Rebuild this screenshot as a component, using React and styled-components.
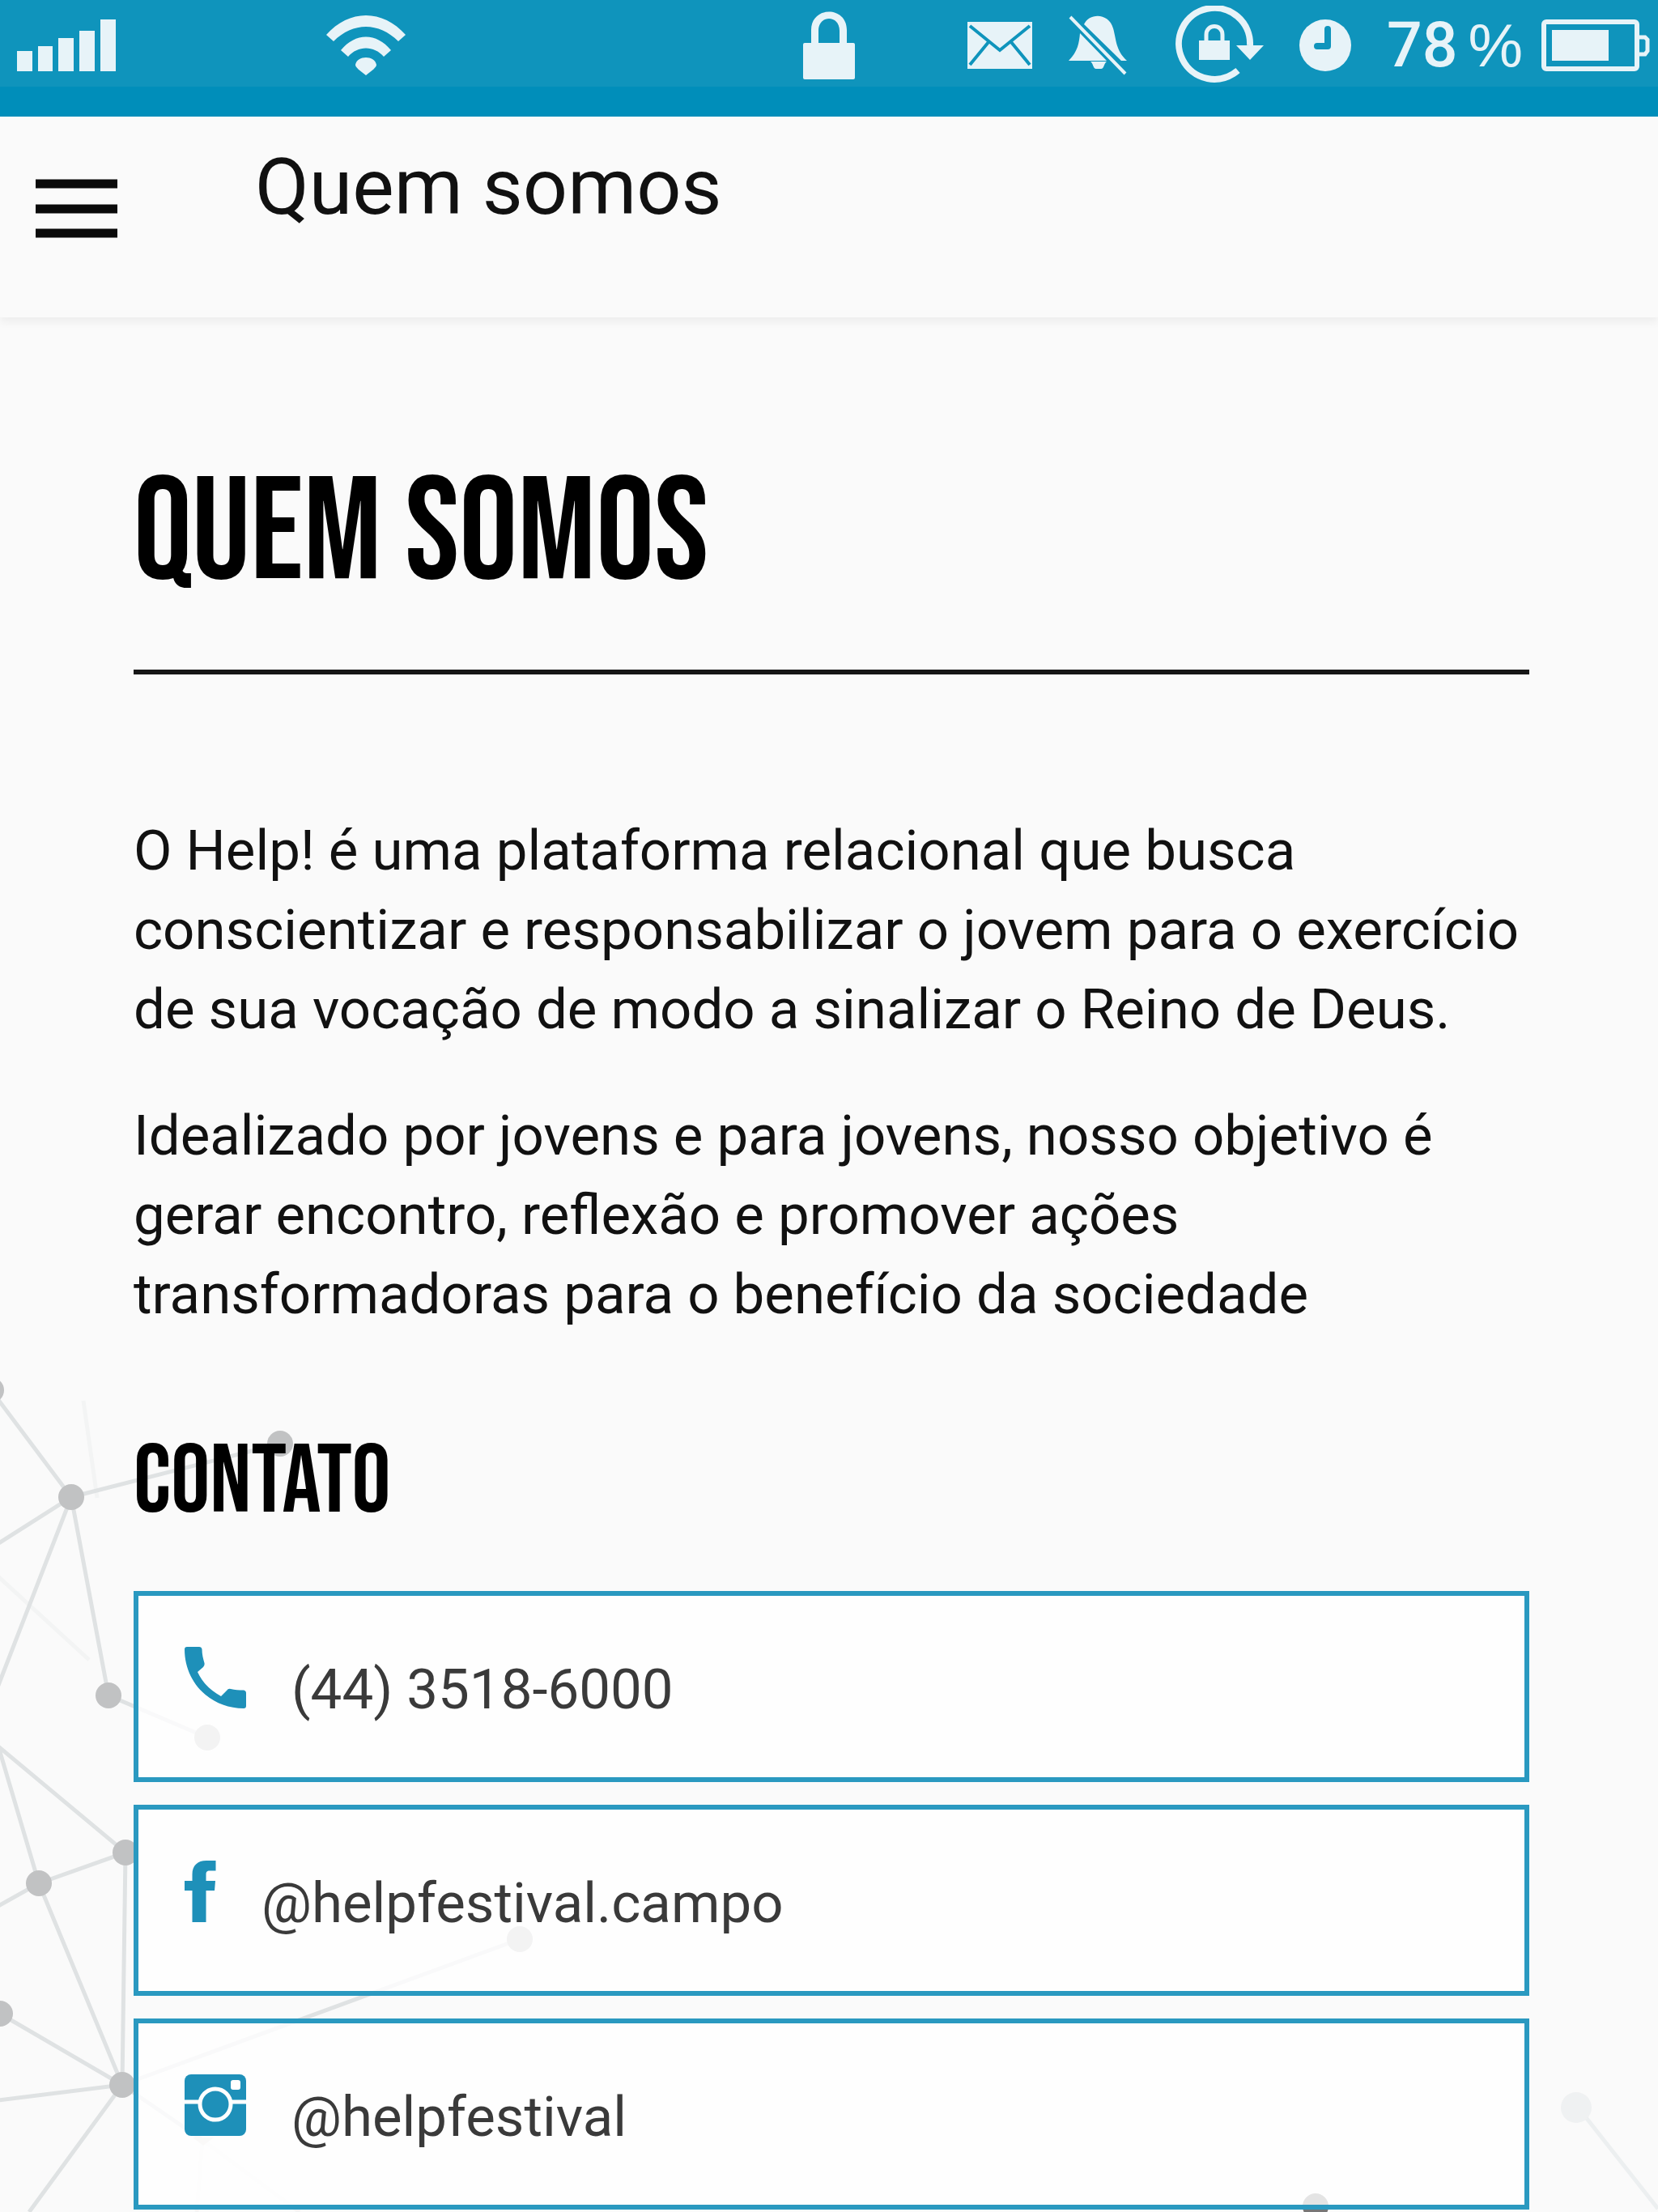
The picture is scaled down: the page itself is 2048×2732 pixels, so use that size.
import React from 'react';
import styled, { createGlobalStyle } from 'styled-components';

const GlobalStyle = createGlobalStyle`
  *, *::before, *::after { box-sizing: border-box; }
  body {
    margin: 0;
    background: #fafafa;
    color: #111;
    font-family: Roboto, 'Liberation Sans', sans-serif;
  }
  h1, h2, p, ul { margin: 0; padding: 0; }
`;

const Screen = styled.div`
  position: relative;
  min-height: 100vh;
  overflow: hidden;
`;

const StatusBar = styled.div`
  display: grid;
  grid-template-columns: 1fr auto 1fr;
  align-items: center;
  height: 144px;
  padding: 0 10px 32px;
  background: linear-gradient(#0f94bc 0 107px, #008eba 107px);
  color: #e7f3f8;
`;

const StatusGroup = styled.div`
  display: flex;
  align-items: center;
  justify-content: ${(p) => (p.$end ? 'flex-end' : 'flex-start')};
  gap: ${(p) => p.$gap}px;
  padding-left: ${(p) => p.$inset || 0}px;
`;

const Charge = styled.span`
  display: flex;
  gap: 13px;
  font: 500 77px/80px Roboto, 'Liberation Sans', sans-serif;
`;

const Percent = styled.span`
  font: 400 76px/80px 'Liberation Sans', Arial, sans-serif;
`;

const Glyph = styled.svg`
  display: block;
  flex: none;
  fill: ${(p) => (p.$line ? 'none' : 'currentColor')};
  stroke: ${(p) => (p.$line ? 'currentColor' : 'none')};
`;

const TopBar = styled.header`
  display: flex;
  align-items: flex-start;
  gap: 170px;
  height: 248px;
  padding: 37px 44px 0;
  box-shadow: 0 6px 10px rgba(0, 0, 0, 0.05);
`;

const MenuButton = styled.button`
  padding: 40px 0 0;
  border: 0;
  background: none;
  color: #0a0a0a;
`;

const TopTitle = styled.p`
  font-size: 97px;
  line-height: 100px;
`;

const Content = styled.main`
  position: relative;
  padding: 178px 159px 0 165px;
`;

const Heading = styled.h1`
  padding-bottom: 77px;
  border-bottom: 6px solid #161616;
  color: #000;
  font: 400 180px/180px 'Bebas Neue', 'Roboto Condensed', sans-serif;
`;

const About = styled.section`
  display: grid;
  gap: 58px;
  margin-top: 169px;
  font-size: 69px;
  line-height: 98px;
`;

const Subheading = styled.h2`
  margin: 123px 0 74px;
  color: #000;
  font: 400 120px/120px 'Bebas Neue', 'Roboto Condensed', sans-serif;
`;

const ContactList = styled.ul`
  display: grid;
  gap: 28px;
  list-style: none;
`;

const ContactLink = styled.a`
  display: flex;
  align-items: baseline;
  gap: 56px;
  height: 236px;
  padding: 63px 57px 0;
  border: 6px solid #2a99c0;
  background: rgba(255, 255, 255, 0.8);
  color: #3a3a3a;
  font-size: 69px;
  line-height: 98px;
  text-decoration: none;

  svg { color: #1e90b9; }
`;

const Network = styled.svg`
  position: absolute;
  top: 1680px;
  ${(p) => p.$side}: 0;
  fill: #c1c2c3;
  stroke: #dfe2e3;
  stroke-width: 5;
  pointer-events: none;

  circle { stroke: none; }
`;

const Signal = () => (
  <Glyph width="122" height="64" viewBox="0 0 122 64" aria-label="Sinal">
    <path d="M0 39h19v25H0zM26 33h18v31H26zM51 23h19v41H51zM77 14h19v50H77zM103 0h19v64h-19z" />
  </Glyph>
);

const Wifi = () => (
  <Glyph width="98" height="74" viewBox="0 0 98 74" aria-label="Wi-Fi">
    <path d="M0 24C28-8 70-8 98 24l-9 8C65 8 33 8 9 32zM18 43c18-22 44-22 62 0l-9 8c-12-14-32-14-44 0zM36 61c2-12 24-12 26 0 0 3-5 7-13 13-8-6-13-10-13-13z" />
  </Glyph>
);

const Lock = () => (
  <Glyph width="64" height="84" viewBox="0 0 64 84" aria-label="Bloqueado">
    <path d="M2 39h8V23C10-7 54-7 54 23v16h8q2 0 2 2v41q0 2-2 2H2q-2 0-2-2V41q0-2 2-2zM19 39h26V24C45 4 19 4 19 24z" />
  </Glyph>
);

const Mail = () => (
  <Glyph width="80" height="58" viewBox="0 0 80 58" aria-label="Mensagem">
    <path d="M0 0h80v58H0z" />
    <path d="M3 5l37 30L77 5M3 53l23-28M77 53L54 25" fill="none" stroke="#0f94bc" strokeWidth="4" />
  </Glyph>
);

const BellOff = () => (
  <Glyph width="74" height="74" viewBox="0 0 74 74" aria-label="Silencioso">
    <path d="M20 11C27-4 51-3 56 16c4 14 3 27 17 40h-7zM15 22l33 34H1c11-11 13-22 14-34zM28 57h20c-4 3-3 9-7 9h-6c-4 0-3-6-7-9z" />
    <path d="M3 2l68 70" stroke="currentColor" strokeWidth="4" />
  </Glyph>
);

const RotationLock = () => (
  <Glyph width="124" height="98" viewBox="0 0 124 98" aria-label="Rotação bloqueada">
    <path d="M92 80A44 44 0 1 1 107 49" fill="none" stroke="currentColor" strokeWidth="8" />
    <path d="M90 49h34l-17 18zM44 43h38v24H44z" />
    <path d="M53 44V36c0-14 20-14 20 0v8" fill="none" stroke="currentColor" strokeWidth="5" />
  </Glyph>
);

const Clock = () => (
  <Glyph width="64" height="64" viewBox="0 0 64 64" aria-label="Alarme">
    <circle cx="32" cy="32" r="32" />
    <path d="M35 12v21H22" fill="none" stroke="#0f94bc" strokeWidth="8" strokeLinecap="round" strokeLinejoin="round" />
  </Glyph>
);

const Battery = () => (
  <Glyph width="134" height="64" viewBox="0 0 134 64" aria-label="Bateria">
    <rect x="3" y="3" width="115" height="58" rx="3" fill="none" stroke="currentColor" strokeWidth="6" />
    <path d="M120 22h8l3 3v14l-3 4h-8" fill="none" stroke="currentColor" strokeWidth="5" />
    <path d="M13 13h70v38H13z" />
  </Glyph>
);

const MenuIcon = () => (
  <Glyph $line width="101" height="74" viewBox="0 0 101 74" strokeWidth="11">
    <path d="M0 6h101M0 37h101M0 67h101" />
  </Glyph>
);

const PhoneIcon = () => (
  <Glyph width="76" height="76" viewBox="0 0 76 76" aria-hidden="true">
    <path d="M3 0h15q3 0 3.500 3c0 6 1.500 12 3 17q.5 3-1.500 5l-7 6c6 13 16 23 29 30l7-7q2-3 5-2c5 1 10 1.500 16 1.500q3 .5 3 3.500v16q0 3-3 3C32 76 0 44 0 3q0-3 3-3z" />
  </Glyph>
);

const FacebookIcon = () => (
  <Glyph width="39" height="76" viewBox="0 0 39 76" aria-hidden="true">
    <path d="M9.500 76V37H0V25h9.500v-8C9.500 6 16 0 27 0h11.500v12.500H31c-3.500 0-4.500 1.500-4.500 4.500v8H38l-1 12H26.500v39z" />
  </Glyph>
);

const InstagramIcon = () => (
  <Glyph width="76" height="76" viewBox="0 0 76 76" aria-hidden="true">
    <rect width="76" height="76" rx="8" />
    <path d="M0 34h76" stroke="#fff" strokeWidth="5" />
    <circle cx="38" cy="37" r="19" stroke="#fff" strokeWidth="5" />
    <rect x="57" y="7" width="12" height="12" rx="3" fill="#fff" />
  </Glyph>
);

const nodes = [
  [-11, 37], [88, 169], [346, 103], [134, 414], [256, 466], [155, 608],
  [48, 646], [0, 807], [151, 895], [642, 715],
];

const edges = [
  'M-11 37L88 169L-30 244M-15 435L88 169L134 414L256 466M88 169L346 103',
  'M-20 462L155 608L48 646L-10 450M-20 684L48 646L151 895L155 608',
  'M0 807L151 895L-10 915M36 1052L151 895L642 715M151 895L250 963',
];

const contacts = [
  { Icon: PhoneIcon, label: '(44) 3518-6000', href: 'tel:+554435186000' },
  { Icon: FacebookIcon, label: '@helpfestival.campo', href: '#facebook' },
  { Icon: InstagramIcon, label: '@helpfestival', href: '#instagram' },
];

export default function App() {
  return (
    <Screen>
      <GlobalStyle />
      <Network $side="left" width="720" height="1052" viewBox="0 0 720 1052" aria-hidden="true">
        <path d="M103 50L120 170M-10 260L110 370M243 1052L250 963L370 1052" fill="none" stroke="#f3f4f4" />
        {edges.map((d) => <path key={d} d={d} fill="none" />)}
        <path d="M238 960h26l-13 10z" fill="#e6e0dd" stroke="none" />
        {nodes.map(([x, y]) => <circle key={`${x} ${y}`} cx={x} cy={y} r="16" />)}
      </Network>
      <Network $side="right" width="440" height="1052" viewBox="0 0 440 1052" aria-hidden="true">
        <path d="M350 934L440 1048" stroke="#eceff0" />
        <circle cx="339" cy="923" r="19" fill="#eff1f2" />
        <circle cx="17" cy="1045" r="16" fill="#777" />
      </Network>

      <StatusBar>
        <StatusGroup $gap={260} $inset={11}>
          <Signal />
          <Wifi />
        </StatusGroup>
        <Lock />
        <StatusGroup $end $gap={44}>
          <Mail />
          <BellOff />
          <RotationLock />
          <Clock />
          <StatusGroup $gap={23}>
            <Charge>78<Percent>%</Percent></Charge>
            <Battery />
          </StatusGroup>
        </StatusGroup>
      </StatusBar>

      <TopBar>
        <MenuButton type="button" aria-label="Abrir menu">
          <MenuIcon />
        </MenuButton>
        <TopTitle>Quem somos</TopTitle>
      </TopBar>

      <Content>
        <Heading>Quem somos</Heading>
        <About>
          <p>O Help! é uma plataforma relacional que busca conscientizar e responsabilizar o jovem para o exercício de sua vocação de modo a sinalizar o Reino de Deus.</p>
          <p>Idealizado por jovens e para jovens, nosso objetivo é gerar encontro, reflexão e promover ações transformadoras para o benefício da sociedade</p>
        </About>
        <Subheading>Contato</Subheading>
        <ContactList>
          {contacts.map(({ Icon, label, href }) => (
            <li key={label}>
              <ContactLink href={href}>
                <Icon />
                {label}
              </ContactLink>
            </li>
          ))}
        </ContactList>
      </Content>
    </Screen>
  );
}
